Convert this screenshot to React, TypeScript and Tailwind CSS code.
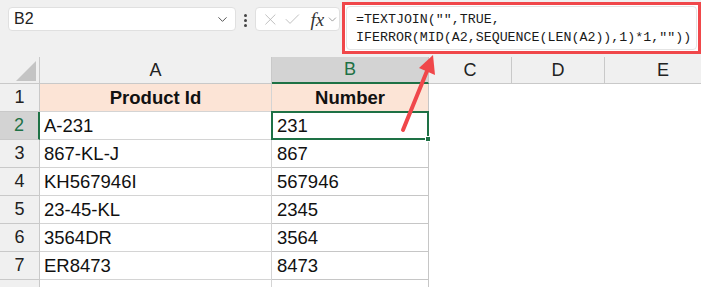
import { ChevronDown, X, Check } from "lucide-react";

const rows = [
  ["A-231", "231"],
  ["867-KL-J", "867"],
  ["KH567946I", "567946"],
  ["23-45-KL", "2345"],
  ["3564DR", "3564"],
  ["ER8473", "8473"],
];

const font = "font-['Liberation_Sans',Arial,sans-serif]";

function ColHead({ label, active }: { label: string; active?: boolean }) {
  return (
    <div
      className={
        active
          ? "flex items-center justify-center border-r border-[#c6c6c6] border-b-2 border-b-[#1e7145] bg-[#d3d3d3] text-[18px] text-[#1e7145]"
          : "flex items-center justify-center border-r border-b border-[#c9c9c9] bg-[#f0f0f0] text-[18px] text-[#222]"
      }
    >
      {label}
    </div>
  );
}

function RowHead({ n, active }: { n?: number; active?: boolean }) {
  return (
    <div
      className={
        active
          ? "flex items-center justify-center border-b border-[#c9c9c9] border-r-2 border-r-[#1e7145] bg-[#d3d3d3] text-[18px] text-[#1e7145]"
          : "flex items-center justify-center border-b border-r border-[#c9c9c9] bg-[#f0f0f0] text-[18px] text-[#222]"
      }
    >
      {n}
    </div>
  );
}

export default function App() {
  return (
    <div className={`relative h-[287px] w-[701px] overflow-hidden bg-white ${font}`}>
      {/* ribbon strip with name box + formula bar */}
      <div className="flex h-[57px] items-start bg-[#f0f0f0]">
        <div className="ml-[8px] mt-[7px] flex h-[24px] w-[228px] items-center justify-between rounded-[4px] border border-[#e0e0e0] bg-white pl-[5px] pr-[5px] text-[16px] text-[#222]">
          <span>B2</span>
          <ChevronDown size={15} strokeWidth={1.6} className="text-[#555]" />
        </div>
        <div className="ml-[8px] mt-[14px] flex flex-col gap-[2px]">
          <span className="h-[3px] w-[3px] rounded-full bg-[#444]" />
          <span className="h-[3px] w-[3px] rounded-full bg-[#444]" />
          <span className="h-[3px] w-[3px] rounded-full bg-[#444]" />
        </div>
        <div className="ml-[8px] mt-[7px] flex h-[24px] w-[85px] items-center rounded-[4px] border border-[#e0e0e0] bg-white pl-[5px] text-[#b5b5b5]">
          <X size={19} strokeWidth={1.1} />
          <Check size={19} strokeWidth={1.1} className="ml-[3px]" />
          <span className="ml-[9px] font-['Liberation_Serif',serif] text-[19px] italic leading-none text-[#333]">
            fx
          </span>
          <ChevronDown size={13} strokeWidth={1.5} className="ml-[2px] text-[#888]" />
        </div>
        <div className="ml-[2px] mt-[2px] h-[52px] flex-1 border-[3px] border-[#f0474a] bg-white p-[1px]">
          <div className="h-full rounded-[4px] border border-[#e4e4e4] pl-[9px] pt-[4px] font-['Liberation_Mono',monospace] text-[13.3px] leading-[18px] text-[#1a1a1a]">
            <div>=TEXTJOIN("",TRUE,</div>
            <div>IFERROR(MID(A2,SEQUENCE(LEN(A2)),1)*1,""))</div>
          </div>
        </div>
      </div>

      {/* sheet grid */}
      <div className="grid grid-cols-[40px_232px_157px_83px_93px_116px] grid-rows-[27px_repeat(7,28px)_28px]">
        <div className="relative border-r border-b border-[#c9c9c9] bg-[#f0f0f0]">
          <svg className="absolute bottom-[2px] right-[3px]" width="20" height="20">
            <polygon points="20,0 20,20 0,20" fill="#c4c4c4" />
          </svg>
        </div>
        <ColHead label="A" />
        <ColHead label="B" active />
        <ColHead label="C" />
        <ColHead label="D" />
        <div className="flex items-center justify-center border-b border-[#c9c9c9] bg-[#f0f0f0] text-[18px] text-[#222]">
          E
        </div>

        {/* header row */}
        <RowHead n={1} />
        <div className="flex items-center justify-center border-r border-b border-[#d4d4d4] bg-[#fce4d6] text-[18.5px] font-bold text-[#111]">
          Product Id
        </div>
        <div className="flex items-center justify-center border-r border-b border-[#c6c6c6] bg-[#fce4d6] text-[18.5px] font-bold text-[#111]">
          Number
        </div>
        <div />
        <div />
        <div />

        {rows.map(([a, b], i) => (
          <div key={a} className="contents">
            <RowHead n={i + 2} active={i === 0} />
            <div className="flex items-center border-r border-b border-[#d4d4d4] pl-[4px] text-[18.5px] text-[#111]">
              {a}
            </div>
            {i === 0 ? (
              <div className="relative -mt-[1px] -ml-[1px] flex items-center border-2 border-[#1e7145] pl-[4px] text-[18.5px] text-[#111]">
                {b}
                <span className="absolute -bottom-[4px] -right-[4px] h-[6px] w-[6px] border border-white bg-[#1e7145]" />
              </div>
            ) : (
              <div className="flex items-center border-r border-b border-[#c6c6c6] pl-[5px] text-[18.5px] text-[#111]">
                {b}
              </div>
            )}
            <div />
            <div />
            <div />
          </div>
        ))}

        <RowHead />
        <div className="border-r border-[#d4d4d4]" />
        <div className="border-r border-[#c6c6c6]" />
      </div>

      {/* annotation arrow */}
      <svg className="pointer-events-none absolute left-0 top-0" width="701" height="287">
        <line x1="403" y1="130" x2="427" y2="71" stroke="#f0474a" strokeWidth="4" strokeLinecap="round" />
        <polygon points="433,55 435,75 419,68" fill="#f0474a" />
      </svg>
    </div>
  );
}
